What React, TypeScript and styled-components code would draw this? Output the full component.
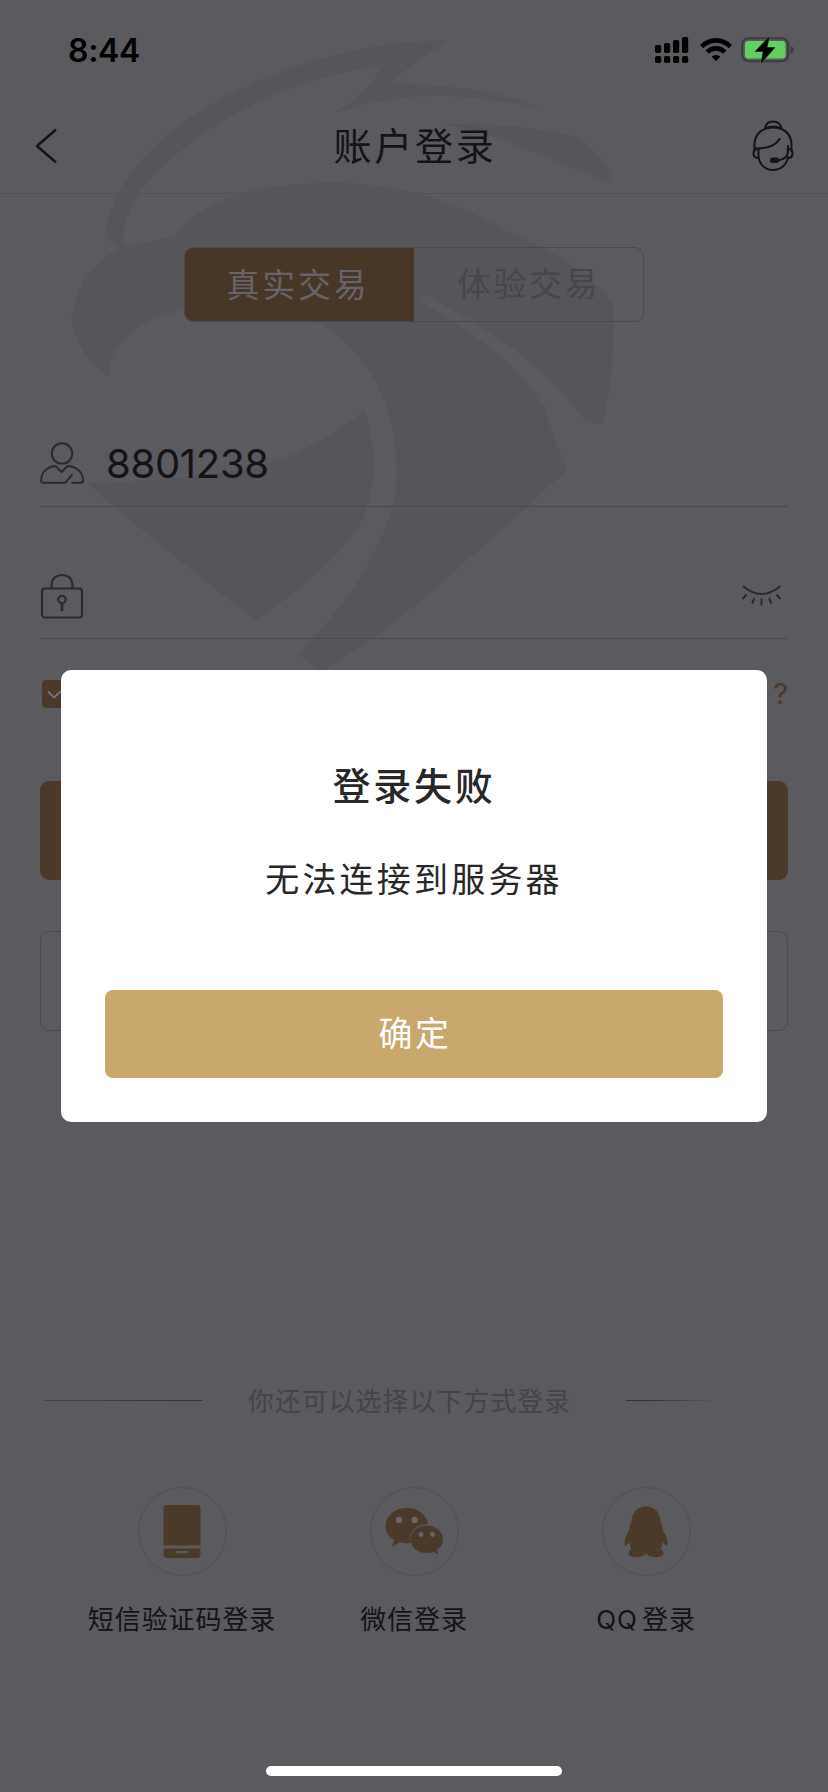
import React from "react";
import styled, { createGlobalStyle } from "styled-components";

const color = {
  page: "#5b5a5f",
  mark: "#565559",
  ink: "#131318",
  icon: "#2a292e",
  muted: "#454449",
  line: "#4a494e",
  gold: "#4b392a",
  goldBright: "#c9a86e",
};

const GlobalStyle = createGlobalStyle`
  * { box-sizing: border-box; }
  body {
    margin: 0;
    background: ${color.page};
    font-family: Inter, "Noto Sans CJK SC", sans-serif;
    color: ${color.ink};
  }
  svg { display: block; flex: none; }
  button { font: inherit; color: inherit; border: 0; padding: 0; background: none; }
`;

const Page = styled.div`
  position: relative;
  width: 828px;
  height: 1792px;
  overflow: hidden;
  display: flex;
  flex-direction: column;
  background: ${color.page};
`;

const Watermark = styled.svg`
  position: absolute;
  top: 0;
  left: 0;
  fill: ${color.mark};
`;

const StatusBar = styled.div`
  position: relative;
  height: 98px;
  padding: 2px 34px 0 68px;
  display: flex;
  align-items: center;
  justify-content: space-between;
  color: #000;
`;

const Clock = styled.span`
  font-size: 32px;
  font-weight: 600;
  letter-spacing: -0.3px;
  line-height: 40px;
  margin-top: 1px;
`;

const StatusIcons = styled.div`
  display: flex;
  align-items: center;
`;

const NavBar = styled.header`
  position: relative;
  height: 96px;
  padding: 0 34px 0 34px;
  display: grid;
  grid-template-columns: 44px 1fr 44px;
  align-items: center;
  border-bottom: 1px solid #525156;
`;

const NavTitle = styled.h1`
  margin: 0;
  text-align: center;
  font-size: 38px;
  font-weight: 400;
  letter-spacing: 2.7px;
  line-height: 50px;
  padding-left: 2px;
`;

const Segment = styled.div`
  position: relative;
  width: 460px;
  height: 75px;
  margin: 53px 0 0 184px;
  display: flex;
  border: 1px solid ${color.line};
  border-radius: 9px;
  overflow: hidden;
`;

const SegmentItem = styled.button<{ $active?: boolean }>`
  flex: 1;
  font-size: 33px;
  letter-spacing: 2.7px;
  line-height: 73px;
  padding: ${(p) => (p.$active ? "1px 2px 0 0" : "0 0 0 1px")};
  margin: ${(p) => (p.$active ? "-1px 0 -1px -1px" : "0")};
  color: ${(p) => (p.$active ? "#66636a" : "#47464b")};
  background: ${(p) => (p.$active ? "#483626" : "transparent")};
`;

const Form = styled.div`
  position: relative;
  padding: 0 40px;
  margin-top: 52px;
`;

const Field = styled.div`
  height: 132.5px;
  padding-top: 47px;
  display: flex;
  align-items: center;
  border-bottom: 1.5px solid ${color.line};
`;

const FieldValue = styled.span`
  flex: 1;
  margin-left: 21px;
  font-size: 40px;
  line-height: 48px;
  letter-spacing: -0.3px;
  padding-top: 2px;
`;

const Options = styled.div`
  height: 28px;
  margin-top: 41px;
  padding-left: 2px;
  display: flex;
  align-items: center;
  justify-content: space-between;
`;

const CheckBox = styled.span`
  width: 28px;
  height: 28px;
  border-radius: 4px;
  background: ${color.gold};
`;

const HelpLink = styled.span`
  font-size: 29px;
  line-height: 28px;
  color: ${color.gold};
`;

const FormButton = styled.div<{ $outlined?: boolean }>`
  height: ${(p) => (p.$outlined ? 100 : 99)}px;
  margin-top: ${(p) => (p.$outlined ? 51 : 73)}px;
  border-radius: 9px;
  background: ${(p) => (p.$outlined ? "transparent" : color.gold)};
  border: ${(p) => (p.$outlined ? `1.5px solid ${color.line}` : "0")};
`;

const OtherLogin = styled.section`
  position: relative;
  margin-top: auto;
  height: 409px;
`;

const Divider = styled.div`
  height: 36px;
  padding: 0 110px 0 44px;
  display: flex;
  align-items: center;
  justify-content: space-between;
`;

const Rule = styled.i<{ $fade?: boolean }>`
  width: ${(p) => (p.$fade ? 92 : 158)}px;
  height: 1px;
  margin-bottom: 2px;
  background: ${(p) =>
    p.$fade ? "linear-gradient(90deg, #343338 25%, #5b5a5f)" : "linear-gradient(90deg, #45444a, #343338)"};
`;

const DividerText = styled.span`
  font-size: 26px;
  line-height: 36px;
  letter-spacing: 0.95px;
  margin-right: 9px;
  padding-top: 2px;
  color: ${color.muted};
`;

const Providers = styled.div`
  display: grid;
  grid-template-columns: repeat(3, 232px);
  padding-left: 66px;
  margin-top: 68px;
`;

const Provider = styled.div`
  display: flex;
  flex-direction: column;
  align-items: center;
`;

const ProviderIcon = styled.span`
  width: 89px;
  height: 89px;
  display: flex;
  align-items: center;
  justify-content: center;
  border: 1.5px solid #4f4e53;
  border-radius: 50%;
`;

const ProviderName = styled.span`
  margin-top: 26px;
  font-size: 26px;
  line-height: 36px;
  letter-spacing: 0.9px;
  word-spacing: -4px;
  white-space: nowrap;
`;

const Overlay = styled.div`
  position: absolute;
  inset: 0;
  display: flex;
  align-items: center;
  justify-content: center;
`;

const Dialog = styled.div`
  width: 706px;
  height: 452px;
  padding: 90px 44px 44px;
  display: flex;
  flex-direction: column;
  align-items: center;
  border-radius: 10px;
  background: #fff;
  color: #272727;
`;

const DialogTitle = styled.h2`
  margin: 0;
  font-size: 38px;
  font-weight: 500;
  line-height: 52px;
  letter-spacing: 2.7px;
`;

const DialogMessage = styled.p`
  margin: 44px 0 0;
  font-size: 34px;
  line-height: 48px;
  letter-spacing: 3.2px;
`;

const DialogButton = styled.button`
  width: 618px;
  height: 88px;
  margin-top: auto;
  padding: 0 0 5px 2px;
  border-radius: 8px;
  font-size: 34px;
  letter-spacing: 2.5px;
  color: #fff;
  background: ${color.goldBright};
`;

const HomeIndicator = styled.div`
  position: absolute;
  left: 266px;
  bottom: 16px;
  width: 296px;
  height: 10px;
  border-radius: 5px;
  background: #fff;
`;

const Eagle = () => (
  <Watermark width="828" height="700" viewBox="0 0 1568 1568" preserveAspectRatio="none">
    <path d="M850 92 Q710 85 520 165 Q330 260 260 370 Q205 450 197 530 L235 560 Q225 480 285 400 Q400 260 560 195 Q640 160 725 145 Q700 205 635 252 Q760 205 880 218 Q960 225 1030 245 Q930 190 740 187 Q790 130 850 92Z" />
    <path d="M840 278 Q980 275 1090 305 Q1150 350 1160 412 Q1080 375 1000 335 Q930 300 840 278Z" />
    <path d="M205 842 Q150 800 135 715 Q150 600 230 555 L330 530 Q400 410 640 408 Q820 415 960 520 Q1110 590 1160 680 Q1165 850 1140 950 L1110 945 Q1000 770 800 662 Q960 790 1030 900 Q1050 1000 1075 1050 Q970 1170 860 1280 Q730 1420 605 1505 L565 1465 Q720 1280 750 1100 Q760 930 690 815 Q630 720 540 690 Q420 660 300 710 Q205 760 205 842Z" />
    <path d="M690 920 Q590 1015 470 1050 Q300 1080 165 1083 Q310 1230 485 1390 Q620 1280 680 1180 Q730 1060 690 920Z" />
    <path d="M800 665 Q890 730 950 785 Q1010 850 1035 905" fill="none" stroke={color.page} strokeWidth="18" />
  </Watermark>
);

const SignalIcon = () => (
  <svg width="34" height="28" viewBox="0 0 34 28" fill="#000">
    <rect x="0" y="9" width="6.2" height="8" rx="1.8" />
    <rect x="9" y="7" width="6.2" height="10" rx="1.8" />
    <rect x="18" y="4" width="6.2" height="13" rx="1.8" />
    <rect x="27" y="1" width="6.2" height="16" rx="1.8" />
    <rect x="0" y="20" width="6.2" height="7" rx="1.8" />
    <rect x="9" y="20" width="6.2" height="7" rx="1.8" />
    <rect x="18" y="20" width="6.2" height="7" rx="1.8" />
    <rect x="27" y="20" width="6.2" height="7" rx="1.8" />
  </svg>
);

const WifiIcon = () => (
  <svg width="32" height="24" viewBox="0 0 32 24" style={{ marginLeft: 11 }}>
    <g fill="none" stroke="#000" strokeWidth="4.6">
      <path d="M1.6 8.6 Q8 2.4 16 2.4 T30.4 8.6" />
      <path d="M7.2 14.2 Q11 10.4 16 10.4 T24.8 14.2" />
    </g>
    <path d="M11.6 18.4 Q16 15.4 20.4 18.4 L16 23.2Z" fill="#000" />
  </svg>
);

const BatteryIcon = () => (
  <svg width="53" height="28" viewBox="0 0 53 28" style={{ marginLeft: 9 }}>
    <rect x="1.2" y="2.2" width="46" height="23" rx="6.5" fill="none" stroke="#3c3b40" strokeWidth="2" />
    <rect x="4" y="5" width="40.5" height="17.5" rx="3.5" fill="#64cf63" />
    <path d="M49.5 10 Q52.6 11 52.6 13.8 Q52.6 16.6 49.5 17.6Z" fill="#3c3b40" />
    <path d="M28.5 0.5 L14 15.5 H22 L20 27.5 L34 11.5 H26Z" fill="#000" stroke="#3f7a42" strokeWidth="1" paintOrder="stroke" />
  </svg>
);

const BackIcon = () => (
  <svg width="24" height="38" viewBox="0 0 24 38" fill="none" stroke={color.ink} strokeWidth="2.4">
    <path d="M22 2.5 L3 19 L22 35.5" strokeLinejoin="round" />
  </svg>
);

const ServiceIcon = () => (
  <svg
    width="42"
    height="52"
    viewBox="0 0 42 52"
    fill="none"
    stroke={color.ink}
    strokeWidth="2"
    strokeLinecap="round"
    style={{ marginLeft: 2 }}
  >
    <path d="M13 8.5 Q14 1.5 21 1.5 Q28 1.5 29.5 8.5 M13.5 8.2 Q21 5.5 29 8.2" />
    <path d="M2.5 31 V24 C3 13 11 7.500 21 7.500 C31 7.500 39 13 39.500 24 V31" />
    <path d="M6.500 29.500 C2.500 28.500 1.500 30 1.500 33.500 Q1.500 38 7 38 M35.500 29.500 C39.500 28.500 40.500 30 40.500 33.500 Q40.500 38 36 38 M6.500 30 V36 C7 45 14 50 21 50 C28 50 35 45 36 37" />
    <path d="M3 28.500 Q22 29 27.500 19 M36 26 V31 Q35.500 40 24 40.500" />
    <rect x="19" y="38.500" width="7" height="3.600" rx="1.800" fill={color.ink} />
  </svg>
);

const UserIcon = () => (
  <svg width="45" height="43" viewBox="0 0 45 43" fill="none" stroke={color.icon} strokeWidth="1.9" strokeLinejoin="round">
    <circle cx="22" cy="11.5" r="10.2" />
    <path d="M15.500 24 L21.500 30 L27.500 24 C37 25 43 30 43 38.500 Q43 40.800 41 40.800 H31.500 M15.500 24 C7 25 1.200 30 1.200 38.500 Q1.200 40.800 3 40.800 H25 Q26.500 40.500 27.500 38 L32.500 32.500" />
  </svg>
);

const LockIcon = () => (
  <svg width="44" height="46" viewBox="0 0 44 46" fill="none" stroke={color.icon} strokeWidth="2.1">
    <rect x="2" y="15.5" width="40" height="29" rx="3" />
    <path d="M11.5 15 V12 Q12.5 2 22 2 Q31.5 2 32.5 12 V15" />
    <circle cx="22" cy="26.5" r="3.7" />
    <path d="M22 30.5 V38" strokeWidth="2.6" />
  </svg>
);

const ClosedEyeIcon = () => (
  <svg width="42" height="22" viewBox="0 0 42 22" fill="none" stroke={color.icon} strokeWidth="1.9" style={{ marginRight: 5 }}>
    <path d="M2 1 Q11 9 20.5 9 Q30 9 39.5 1" />
    <path d="M5.5 9.5 L1.5 14 M13.5 13 L11 18.5 M20.5 13.5 V20.5 M28 13 L30.5 18.5 M35.5 9.5 L39.5 14" />
  </svg>
);

const PhoneIcon = () => (
  <svg width="38" height="54" viewBox="0 0 38 54" fill={color.gold}>
    <path d="M3 0 H35 Q37.5 0 37.5 3 V40.5 H0.5 V3 Q0.5 0 3 0Z" />
    <path fillRule="evenodd" d="M0.5 43.5 H37.5 V49 Q37.5 53 34 53 H4 Q0.5 53 0.5 49Z M12.5 46 V48.2 H25.5 V46Z" />
  </svg>
);

const WechatIcon = () => (
  <svg width="60" height="50" viewBox="0 0 60 50" fill={color.gold}>
    <path d="M23 1 C10 1 1.500 9 1.500 19 C1.500 25 5 30 10 33 L8 39.500 L16 35.300 Q21 37 27 36 C23 24 34 17 44 17 C42 7 34 1 23 1Z" />
    <path d="M43 18.500 C33 18.500 26.500 25 26.500 32.500 C26.500 40 33 46 43 46 Q46.500 46 49.500 45 L54.500 47.500 L53 43 C57 40 59 37 59 32.500 C59 25 52 18.500 43 18.500Z" />
    <g fill="#66646a">
      <circle cx="15" cy="13" r="3.2" />
      <circle cx="30.5" cy="13" r="3.2" />
      <circle cx="37" cy="27.5" r="2.4" />
      <circle cx="48.5" cy="27.5" r="2.4" />
    </g>
  </svg>
);

const PenguinIcon = () => (
  <svg width="46" height="52" viewBox="0 0 46 52" fill={color.gold}>
    <path d="M23 0.500 C14 0.500 9 7 8.500 15 Q6.500 21 6 25 C3 29 1 34 1.500 39 Q3 40.500 6.500 36 Q7 40 8.500 43 C5 45.500 5.500 47 6 49.500 Q11 52.500 18 50.500 Q21 50 23 47.800 Q25 50 28 50.500 Q35 52.500 40 49.500 C41 47 41 45.500 37.500 43 Q39 40 39.500 36 Q43 40.500 44.500 39 C45 34 43 29 40 25 Q39.500 21 37.500 15 C37 7 32 0.500 23 0.500Z" />
  </svg>
);

const providers = [
  { name: "短信验证码登录", icon: <PhoneIcon /> },
  { name: "微信登录", icon: <WechatIcon /> },
  { name: "QQ 登录", icon: <PenguinIcon /> },
];

export default function App() {
  return (
    <>
      <GlobalStyle />
      <Page>
        <Eagle />
        <StatusBar>
          <Clock>8:44</Clock>
          <StatusIcons>
            <SignalIcon />
            <WifiIcon />
            <BatteryIcon />
          </StatusIcons>
        </StatusBar>
        <NavBar>
          <BackIcon />
          <NavTitle>账户登录</NavTitle>
          <ServiceIcon />
        </NavBar>
        <Segment>
          <SegmentItem $active>真实交易</SegmentItem>
          <SegmentItem>体验交易</SegmentItem>
        </Segment>
        <Form>
          <Field>
            <UserIcon />
            <FieldValue>8801238</FieldValue>
          </Field>
          <Field>
            <LockIcon />
            <FieldValue />
            <ClosedEyeIcon />
          </Field>
          <Options>
            <CheckBox>
              <svg width="28" height="28" viewBox="0 0 28 28" fill="none" stroke="#77727a" strokeWidth="1.8">
                <path d="M6 11.500 L12 17.500 L22 8.500" />
              </svg>
            </CheckBox>
            <HelpLink>?</HelpLink>
          </Options>
          <FormButton />
          <FormButton $outlined />
        </Form>
        <OtherLogin>
          <Divider>
            <Rule />
            <DividerText>你还可以选择以下方式登录</DividerText>
            <Rule $fade />
          </Divider>
          <Providers>
            {providers.map((p) => (
              <Provider key={p.name}>
                <ProviderIcon>{p.icon}</ProviderIcon>
                <ProviderName>{p.name}</ProviderName>
              </Provider>
            ))}
          </Providers>
        </OtherLogin>
        <Overlay>
          <Dialog>
            <DialogTitle>登录失败</DialogTitle>
            <DialogMessage>无法连接到服务器</DialogMessage>
            <DialogButton>确定</DialogButton>
          </Dialog>
        </Overlay>
        <HomeIndicator />
      </Page>
    </>
  );
}
